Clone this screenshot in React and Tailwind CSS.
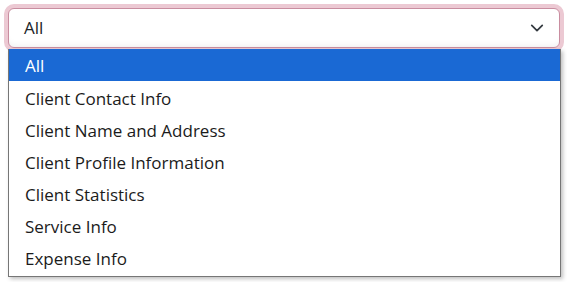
export default function App() {
  const items = [
    "All",
    "Client Contact Info",
    "Client Name and Address",
    "Client Profile Information",
    "Client Statistics",
    "Service Info",
    "Expense Info",
  ];
  return (
    <div
      className="w-[567px] h-[282px] bg-white pt-2 pl-2 pr-[6px]"
      style={{ fontFamily: '"Open Sans", "Noto Sans", sans-serif' }}
    >
      <div className="relative">
        <div className="flex items-center justify-between h-[40px] w-[552px] rounded-[6px] border border-[#c98da0] bg-white shadow-[0_0_0_4px_#ecc9d3,inset_0_-6px_6px_-4px_rgba(0,0,0,0.06)] pl-[15px] pr-[15px] text-[17px] text-[#212529]">
          <span className="-mt-[1px]">All</span>
          <svg width="14" height="14" viewBox="0 0 16 16" fill="none" stroke="#343a40" strokeWidth="2" strokeLinecap="round" strokeLinejoin="round">
            <path d="M2 5l6 6 6-6" />
          </svg>
        </div>
        <div className="relative z-10 mt-[1px] w-[553px] border-x border-b border-[#767676] bg-white shadow-[2px_2px_4px_rgba(0,0,0,0.25)] pb-[3px] text-[17px]">
          {items.map((t, i) => (
            <div
              key={t}
              className={
                "h-[32px] flex items-center pl-[16px] " +
                (i === 0 ? "bg-[#1a69d4] text-white pt-[2px]" : "text-[#1b1b1b] pt-[4px]")
              }
            >
              {t}
            </div>
          ))}
        </div>
      </div>
    </div>
  );
}
